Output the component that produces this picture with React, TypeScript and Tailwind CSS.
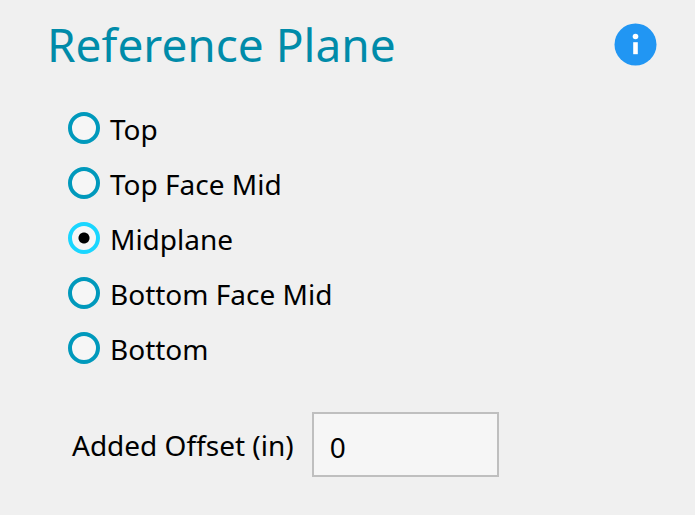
import { useState } from "react";

const planes = ["Top", "Top Face Mid", "Midplane", "Bottom Face Mid", "Bottom"];

interface PlaneOptionProps {
  label: string;
  checked: boolean;
  onSelect: () => void;
}

function PlaneOption({ label, checked, onSelect }: PlaneOptionProps) {
  return (
    <label className="flex h-[55px] w-fit items-center gap-[10px]">
      <input
        type="radio"
        name="plane"
        value={label}
        checked={checked}
        onChange={onSelect}
        className="size-8 shrink-0 appearance-none rounded-full border-4 border-[#0099bc] bg-[#f6f6f6] checked:border-[#1ad6ff] checked:bg-[radial-gradient(circle,#000_5px,#f6f6f6_6px)]"
      />
      <span className="pt-0.5">{label}</span>
    </label>
  );
}

export default function App() {
  const [plane, setPlane] = useState("Midplane");
  const [offset, setOffset] = useState("0");

  return (
    <main className="min-h-screen bg-[#f0f0f0] pt-4 pr-[38px] pb-8 pl-[47px] font-['Noto_Sans',sans-serif] text-[28px] text-black">
      <header className="flex items-center justify-between">
        <h1 className="text-[46px] leading-[56px] text-[#008ba9]">Reference Plane</h1>
        <button type="button" aria-label="About the reference plane" className="size-[43px] shrink-0">
          <svg viewBox="0 0 43 43" className="size-full" aria-hidden="true">
            <circle cx="21.5" cy="21.5" r="21" fill="#2196f3" />
            <circle cx="21.5" cy="13.5" r="2.8" fill="#fff" />
            <rect x="19.2" y="19.2" width="4.6" height="12" fill="#fff" />
          </svg>
        </button>
      </header>

      <fieldset aria-label="Plane" className="mt-7 pl-[21px]">
        {planes.map((p) => (
          <PlaneOption key={p} label={p} checked={plane === p} onSelect={() => setPlane(p)} />
        ))}
      </fieldset>

      <div className="mt-[37px] flex items-center gap-[18px] pl-[25px]">
        <label htmlFor="offset">Added Offset (in)</label>
        <input
          id="offset"
          type="text"
          value={offset}
          onChange={(e) => setOffset(e.target.value)}
          className="h-[65px] w-[187px] border-2 border-[#bfbfbf] bg-[#f6f6f6] px-4 pt-1"
        />
      </div>
    </main>
  );
}
